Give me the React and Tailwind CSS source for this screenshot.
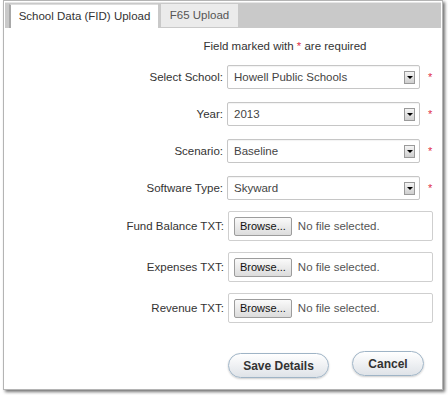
import React from 'react';

const font = {fontFamily: '"Liberation Sans", Arial, sans-serif'};

const SelectRow = ({label, value}) => (
    <div className="flex items-center h-[24px]">
        <div className="w-[222px] text-right pr-[4px] text-[#333]">{label}</div>
        <div className="relative w-[193px] h-[24px] border border-[#c6c6c6] rounded-[2px] bg-white flex items-center pl-[6px] text-[#444] shadow-[inset_0_1px_1px_rgba(0,0,0,0.05)]">
            {value}
            <div className="absolute right-[4px] top-[5px] w-[11px] h-[13px] border border-[#9a9a9a] bg-gradient-to-b from-[#f4f4f4] to-[#cfcfcf] flex items-center justify-center">
                <div className="w-0 h-0 border-l-[3px] border-r-[3px] border-t-[3px] border-l-transparent border-r-transparent border-t-black"/>
            </div>
        </div>
        <span className="ml-[8px] text-[#e0304a] text-[11px]">*</span>
    </div>
);

const FileRow = ({label}) => (
    <div className="flex items-center h-[30px]">
        <div className="w-[223px] text-right pr-[4px] text-[#333]">{label}</div>
        <div className="w-[205px] h-[30px] border border-[#cfcfcf] rounded-[2px] bg-white flex items-center pl-[5px] text-[#555]">
            <div className="h-[19px] px-[5px] flex items-center border border-[#9c9c9c] rounded-[2px] bg-gradient-to-b from-[#fafafa] to-[#dcdcdc] text-[#111] text-[11px]">
                Browse...
            </div>
            <span className="ml-[6px]">No file selected.</span>
        </div>
    </div>
);

export default function App() {
    return (
        <div className="w-[448px] h-[395px] bg-white text-[11.5px]" style={font}>
            <div className="ml-[3px] w-[440px] h-[390px] border border-[#b4b4b4] shadow-[2px_2px_3px_rgba(0,0,0,0.55)] bg-white pt-[1px] px-[1px]">
                <div className="h-[26px] bg-[#c9c9c9] border-t border-[#e6e6e6] flex items-end pl-[4px] gap-[3px]">
                    <div className="h-[24px] w-[149px] bg-white border-l-[2px] border-[#a8a8a8] border-t border-t-[#dcdcdc] flex items-center justify-center text-[#333] text-[11.5px]">
                        School Data (FID) Upload
                    </div>
                    <div className="h-[23px] w-[77px] bg-[#ebebeb] flex items-center justify-center text-[#555] text-[11.5px] mb-[1px]">
                        F65 Upload
                    </div>
                </div>
                <div className="text-center pl-[124px] mt-[10px] text-[#333]">
                    Field marked with <span className="text-[#e0304a]">*</span> are required
                </div>
                <div className="mt-[10px] flex flex-col gap-[13px]">
                    <SelectRow label="Select School:" value="Howell Public Schools"/>
                    <SelectRow label="Year:" value="2013"/>
                    <SelectRow label="Scenario:" value="Baseline"/>
                    <SelectRow label="Software Type:" value="Skyward"/>
                </div>
                <div className="mt-[11px] flex flex-col gap-[11px]">
                    <FileRow label="Fund Balance TXT:"/>
                    <FileRow label="Expenses TXT:"/>
                    <FileRow label="Revenue TXT:"/>
                </div>
                <div className="mt-[28px] flex items-start pl-[223px]">
                    <button className="mt-[2px] w-[101px] h-[25px] rounded-full border border-[#9fb4c6] bg-gradient-to-b from-[#ffffff] to-[#dfe3e8] text-[#333] font-bold text-[12px] shadow-[0_1px_2px_rgba(0,0,0,0.2)]">
                        Save Details
                    </button>
                    <button className="ml-[23px] w-[72px] h-[25px] rounded-full border border-[#9fb4c6] bg-gradient-to-b from-[#ffffff] to-[#dfe3e8] text-[#333] font-bold text-[12px] shadow-[0_1px_2px_rgba(0,0,0,0.2)]">
                        Cancel
                    </button>
                </div>
            </div>
        </div>
    );
}
